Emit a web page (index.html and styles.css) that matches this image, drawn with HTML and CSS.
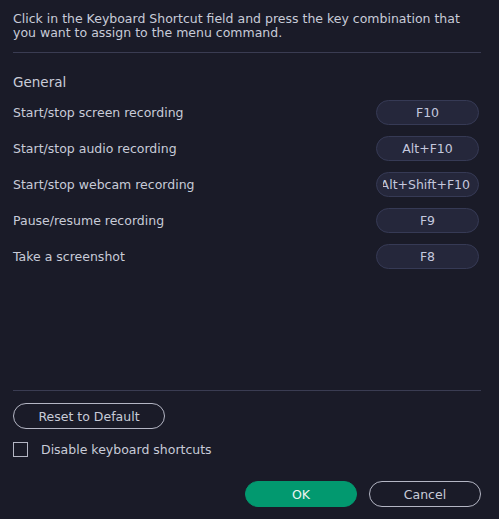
FILE: index.html
```html
<!DOCTYPE html>
<html>
<head>
<meta charset="utf-8">
<link rel="stylesheet" href="styles.css">
</head>
<body>
<div class="dialog">
  <p class="intro">Click in the Keyboard Shortcut field and press the key combination that<br>you want to assign to the menu command.</p>
  <div class="sep"></div>
  <div class="section">General</div>
  <div class="rows">
    <div class="row"><span class="label">Start/stop screen recording</span><span class="key">F10</span></div>
    <div class="row"><span class="label">Start/stop audio recording</span><span class="key">Alt+F10</span></div>
    <div class="row"><span class="label">Start/stop webcam recording</span><span class="key clip"><span class="clip-box"><span>Alt+Shift+F10</span></span></span></div>
    <div class="row"><span class="label">Pause/resume recording</span><span class="key">F9</span></div>
    <div class="row"><span class="label">Take a screenshot</span><span class="key">F8</span></div>
  </div>
  <div class="sep bottom"></div>
  <button class="btn reset">Reset to Default</button>
  <label class="check"><span class="box"></span><span>Disable keyboard shortcuts</span></label>
  <div class="actions">
    <button class="btn ok">OK</button>
    <button class="btn cancel">Cancel</button>
  </div>
</div>
</body>
</html>
```
FILE: styles.css
```css
html, body {
  margin: 0;
  padding: 0;
  background: #1a1b28;
}
body {
  width: 499px;
  height: 519px;
  overflow: hidden;
  font-family: "DejaVu Sans", Verdana, sans-serif;
  font-size: 12.5px;
  color: #c8cbd8;
}
.dialog {
  padding: 12px 18px 0 13px;
  display: flex;
  flex-direction: column;
}
.intro {
  margin: 0;
  line-height: 14px;
}
.sep {
  height: 1px;
  background: #3a3c52;
  margin-top: 12px;
}
.section {
  margin-top: 21px;
  font-size: 13.5px;
  line-height: 16px;
  color: #c9ccd8;
}
.rows {
  margin-top: 10px;
  display: flex;
  flex-direction: column;
  gap: 11px;
}
.row {
  display: flex;
  align-items: center;
  justify-content: space-between;
  height: 25px;
}
.key {
  width: 103px;
  height: 25px;
  box-sizing: border-box;
  border: 1px solid #363a55;
  background: #25273b;
  border-radius: 13px;
  display: flex;
  align-items: center;
  justify-content: center;
  color: #c4c8de;
  margin-right: 2px;
  overflow: hidden;
  white-space: nowrap;
}
.key.clip {
  padding: 0 8px 0 6px;
}
.clip-box {
  flex: 1;
  min-width: 0;
  overflow: hidden;
  display: flex;
  justify-content: flex-end;
}
.sep.bottom {
  margin-top: 121px;
}
.btn {
  font-family: inherit;
  font-size: 12.5px;
  color: #c8cbd8;
  border-radius: 13px;
  height: 26px;
  box-sizing: border-box;
  background: transparent;
  border: 1px solid #b4b6c4;
  padding: 0;
}
.reset {
  margin-top: 12px;
  width: 152px;
  align-self: flex-start;
}
.check {
  margin-top: 12px;
  display: flex;
  align-items: center;
  gap: 13px;
  height: 16px;
}
.box {
  width: 15px;
  height: 15px;
  box-sizing: border-box;
  border: 1px solid #b4b6c4;
}
.actions {
  margin-top: 24px;
  display: flex;
  justify-content: flex-end;
  gap: 12px;
}
.ok {
  width: 112px;
  background: #02996f;
  border-color: #02996f;
  color: #eef4f1;
}
.cancel {
  width: 112px;
}
```
